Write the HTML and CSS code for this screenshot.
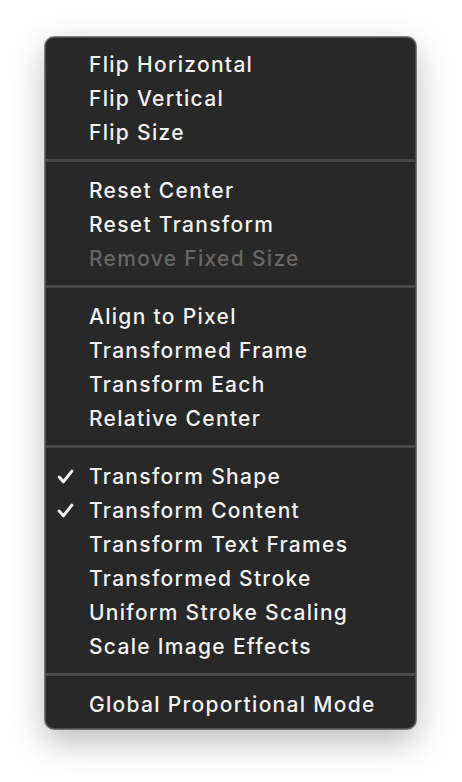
FILE: index.html
```html
<!DOCTYPE html>
<html lang="en">
<head>
    <meta charset="UTF-8">
    <meta name="viewport" content="width=device-width, initial-scale=1.0">
    <title>Transform Menu</title>
    <link rel="stylesheet" href="styles.css">
</head>
<body>
    <div class="menu">
        <ul class="menu-group">
            <li class="menu-item">Flip Horizontal</li>
            <li class="menu-item">Flip Vertical</li>
            <li class="menu-item">Flip Size</li>
        </ul>
        <div class="separator"></div>
        <ul class="menu-group">
            <li class="menu-item">Reset Center</li>
            <li class="menu-item">Reset Transform</li>
            <li class="menu-item disabled">Remove Fixed Size</li>
        </ul>
        <div class="separator"></div>
        <ul class="menu-group">
            <li class="menu-item">Align to Pixel</li>
            <li class="menu-item">Transformed Frame</li>
            <li class="menu-item">Transform Each</li>
            <li class="menu-item">Relative Center</li>
        </ul>
        <div class="separator"></div>
        <ul class="menu-group">
            <li class="menu-item checked">
                <svg class="check" viewBox="0 0 16 14"><polyline points="2,7.5 6,12 14,2"/></svg>
                Transform Shape
            </li>
            <li class="menu-item checked">
                <svg class="check" viewBox="0 0 16 14"><polyline points="2,7.5 6,12 14,2"/></svg>
                Transform Content
            </li>
            <li class="menu-item">Transform Text Frames</li>
            <li class="menu-item">Transformed Stroke</li>
            <li class="menu-item">Uniform Stroke Scaling</li>
            <li class="menu-item">Scale Image Effects</li>
        </ul>
        <div class="separator"></div>
        <ul class="menu-group">
            <li class="menu-item">Global Proportional Mode</li>
        </ul>
    </div>
</body>
</html>
```

FILE: styles.css
```css
body {
    margin: 0;
    height: 100vh;
    background: #ffffff;
    font-family: Inter, "Liberation Sans", sans-serif;
}

.menu {
    position: relative;
    top: 37px;
    left: 45px;
    width: 369px;
    box-sizing: content-box;
    padding: 10px 0 6px;
    background-color: #282828;
    border: 1px solid #4f4f4f;
    border-radius: 9px;
    box-shadow: 0 0 0 1px rgba(0, 0, 0, 0.45), 0 12px 34px rgba(0, 0, 0, 0.28);
}

.menu-group {
    list-style: none;
    margin: 0;
    padding: 0;
}

.menu-item {
    position: relative;
    height: 34px;
    line-height: 33px;
    padding-left: 43px;
    font-size: 21px;
    font-weight: 500;
    letter-spacing: 1.3px;
    color: #f2f2f2;
    white-space: nowrap;
}

.menu-item.disabled {
    color: #666666;
}

.check {
    position: absolute;
    left: 11px;
    top: 9px;
    width: 17px;
    height: 15px;
    fill: none;
    stroke: #f2f2f2;
    stroke-width: 2.8;
    stroke-linecap: round;
    stroke-linejoin: round;
}

.separator {
    height: 3px;
    margin: 9px 0 12px;
    background-color: #484848;
}
```
